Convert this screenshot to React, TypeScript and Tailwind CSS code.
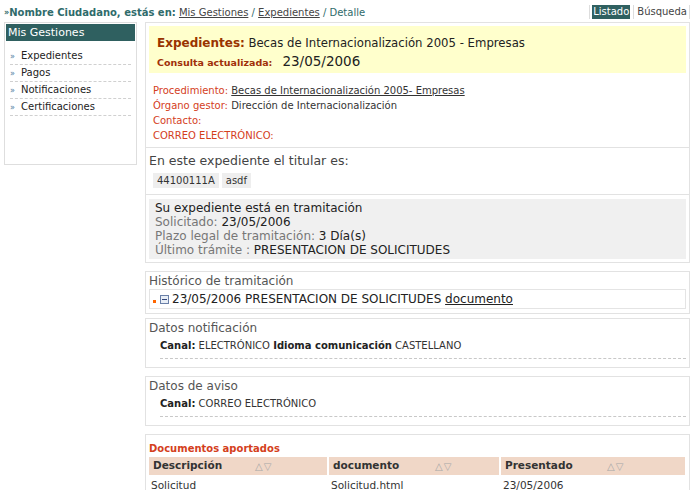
import React from 'react';

const Box: React.FC<{ className?: string; children: React.ReactNode }> = ({ className = '', children }) => (
  <div className={`border border-[#e2e2e2] ${className}`}>{children}</div>
);

const SortArrows = () => <span className="text-[10px] text-[#a8a8a8] tracking-[1px] font-normal">△▽</span>;

export default function App() {
  const menu = ['Expedientes', 'Pagos', 'Notificaciones', 'Certificaciones'];

  return (
    <div className="w-[700px] h-[490px] overflow-hidden bg-white font-['DejaVu_Sans',Verdana,sans-serif] text-[#333] text-[11px]">
      {/* top bar */}
      <div className="flex items-center justify-between h-[22px] pl-[4px] pr-[10px] pt-[2px]">
        <div className="text-[10px] text-[#2f6b6b]">
          <span className="font-bold">
            <span className="text-[8px] align-middle">»</span>Nombre Ciudadano, estás en:
          </span>{' '}
          <span className="underline text-[#444]">Mis Gestiones</span> / <span className="underline text-[#444]">Expedientes</span> / Detalle
        </div>
        <div className="flex items-center text-[10px] text-[#444]">
          <span className="w-px h-[14px] bg-[#ddd] mr-[2px]" />
          <span className="bg-[#2f6060] text-white px-[1px] leading-[14px]">Listado</span>
          <span className="w-px h-[14px] bg-[#ddd] mx-[3px]" />
          <span className="leading-[14px]">Búsqueda</span>
          <span className="w-px h-[14px] bg-[#ddd] ml-[2px]" />
        </div>
      </div>

      <div className="flex items-start pl-[4px] gap-[8px]">
        {/* sidebar */}
        <div className="w-[133px] h-[143px] border border-[#dedede] p-[1px] shrink-0">
          <div className="bg-[#2f6060] text-white h-[17px] leading-[17px] pl-[2px] text-[11px]">Mis Gestiones</div>
          <ul className="px-[4px] pt-[7px]">
            {menu.map((m) => (
              <li key={m} className="h-[17px] leading-[16px] border-b border-dashed border-[#d0d0d0] text-[10px] text-[#222]">
                <span className="inline-block w-[11px] text-[8px] text-[#4a7aa0]">»</span>
                {m}
              </li>
            ))}
          </ul>
        </div>

        {/* main */}
        <div className="w-[545px] flex flex-col">
          <Box className="p-[3px] pb-[4px]">
            <div className="bg-[#ffffcc] h-[47px] pl-[8px] pt-[9px]">
              <div className="leading-[16px]">
                <span className="font-bold text-[12px] text-[#993300]">Expedientes:</span>{' '}
                <span className="text-[11.7px] text-[#222]">Becas de Internacionalización 2005 - Empresas</span>
              </div>
              <div className="leading-[16px] mt-[1px]">
                <span className="font-bold text-[9.5px] text-[#a0300a]">Consulta actualizada:</span>
                <span className="text-[13.5px] text-[#222] ml-[10px]">23/05/2006</span>
              </div>
            </div>
            <div className="pl-[4px] pt-[10px] text-[10px] leading-[15px] text-[#d4401c]">
              <div>
                Procedimiento: <span className="underline text-[#333]">Becas de Internacionalización 2005- Empresas</span>
              </div>
              <div>
                Órgano gestor: <span className="text-[#333]">Dirección de Internacionalización</span>
              </div>
              <div>Contacto:</div>
              <div>CORREO ELECTRÓNICO:</div>
            </div>
          </Box>

          <Box className="border-t-0 px-[3px] pt-[5px] pb-[6px]">
            <div className="text-[12.5px] text-[#444] leading-[15px]">En este expediente el titular es:</div>
            <div className="flex gap-[3px] mt-[5px] ml-[4px]">
              <span className="bg-[#eeeeee] px-[4px] leading-[15px] text-[10px] text-[#333]">44100111A</span>
              <span className="bg-[#eeeeee] px-[4px] leading-[15px] text-[10px] text-[#333]">asdf</span>
            </div>
          </Box>

          <Box className="border-t-0 p-[3px] pt-[4px]">
            <div className="bg-[#f0f0f0] h-[60px] pl-[6px] pt-[2px] text-[12px] leading-[14px]">
              <div className="text-[#222]">Su expediente está en tramitación</div>
              <div className="text-[#777]">
                Solicitado: <span className="text-[#222]">23/05/2006</span>
              </div>
              <div className="text-[#777]">
                Plazo legal de tramitación: <span className="text-[#222]">3 Día(s)</span>
              </div>
              <div className="text-[#777]">
                Último trámite : <span className="text-[#222]">PRESENTACION DE SOLICITUDES</span>
              </div>
            </div>
          </Box>

          <Box className="mt-[8px] px-[3px] pt-[2px] pb-[4px]">
            <div className="text-[12px] text-[#555] leading-[15px]">Histórico de tramitación</div>
            <div className="border border-[#e4e4e4] h-[20px] flex items-center pl-[3px] text-[12px] text-[#222]">
              <span className="w-[3px] h-[3px] bg-[#ff6600] mr-[4px] mt-[4px]" />
              <svg width="9" height="9" viewBox="0 0 9 9" className="mr-[3px]">
                <rect x="0.5" y="0.5" width="8" height="8" fill="#e8eef6" stroke="#6a80a8" />
                <rect x="2" y="4" width="5" height="1" fill="#33457a" />
              </svg>
              23/05/2006 PRESENTACION DE SOLICITUDES&nbsp;<span className="underline">documento</span>
            </div>
          </Box>

          <Box className="mt-[4px] px-[3px] pt-[2px] pb-[8px]">
            <div className="text-[12px] text-[#555] leading-[15px]">Datos notificación</div>
            <div className="ml-[11px] mt-[2px] pb-[4px] border-b border-dashed border-[#c8c8c8] text-[10px] leading-[16px] text-[#333]">
              <span className="font-bold text-[#222]">Canal:</span> ELECTRÓNICO{' '}
              <span className="font-bold text-[#222]">Idioma comunicación</span> CASTELLANO
            </div>
          </Box>

          <Box className="mt-[8px] px-[3px] pt-[2px] pb-[8px]">
            <div className="text-[12px] text-[#555] leading-[15px]">Datos de aviso</div>
            <div className="ml-[11px] mt-[2px] pb-[4px] border-b border-dashed border-[#c8c8c8] text-[10px] leading-[16px] text-[#333]">
              <span className="font-bold text-[#222]">Canal:</span> CORREO ELECTRÓNICO
            </div>
          </Box>

          <Box className="mt-[8px] px-[3px] pt-[7px] pb-[10px]">
            <div className="text-[10px] text-[#d4401c] font-bold leading-[14px]">Documentos aportados</div>
            <div className="grid grid-cols-[178px_170px_184px] gap-x-[2px] mt-[1px]">
              {['Descripción', 'documento', 'Presentado'].map((h) => (
                <div key={h} className="bg-[#f0d7c7] h-[18px] flex items-center pl-[4px] text-[10.5px] font-bold text-[#333]">
                  <span className="w-[102px]">{h}</span>
                  <SortArrows />
                </div>
              ))}
              {['Solicitud', 'Solicitud.html', '23/05/2006'].map((c) => (
                <div key={c} className="h-[20px] leading-[20px] pl-[2px] text-[10.5px] text-[#333]">
                  {c}
                </div>
              ))}
            </div>
          </Box>
        </div>
      </div>
    </div>
  );
}
